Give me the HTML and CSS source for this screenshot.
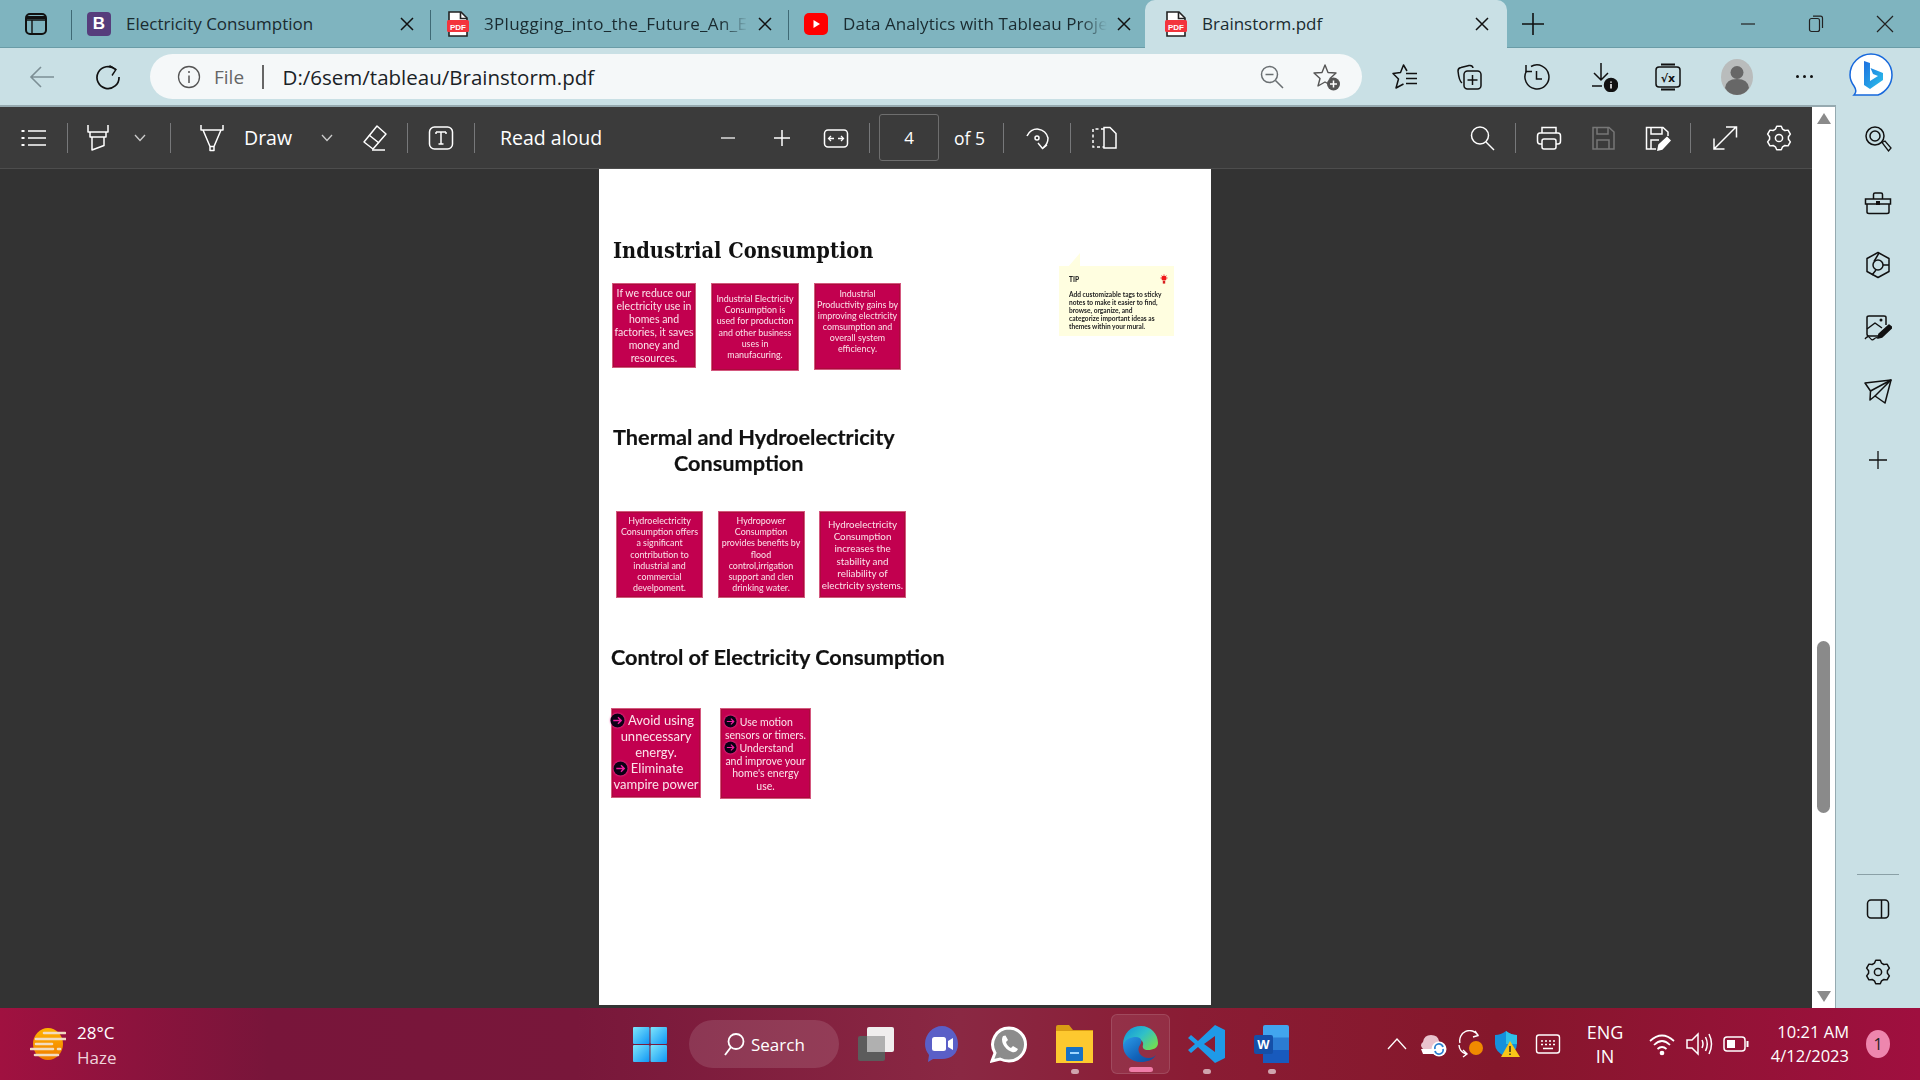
FILE: index.html
```html
<!DOCTYPE html>
<html lang="en">
<head>
  <meta charset="UTF-8" />
  <title>Brainstorm.pdf</title>
  <link rel="stylesheet" href="styles.css">
</head>
<body>

<svg class="sprite" width="0" height="0">
  <symbol id="gear" viewBox="0 0 28 28">
    <path d="M10.44 5.19 11.71 2.22H16.29L17.56 5.19 19.85 6.51 23.06 6.13 25.35 10.09 23.41 12.68V15.32L25.35 17.91 23.06 21.87 19.85 21.49 17.56 22.81 16.29 25.78H11.71L10.44 22.81 8.15 21.49 4.94 21.87 2.65 17.91 4.59 15.32V12.68L2.65 10.09 4.94 6.13 8.15 6.51Z" fill="none" stroke="currentColor" stroke-width="1.5" stroke-linejoin="round"/>
    <circle cx="14" cy="14" r="3.6" fill="none" stroke="currentColor" stroke-width="1.5"/>
  </symbol>
  <symbol id="arrow" viewBox="0 0 16 16">
    <circle cx="8" cy="8" r="7.500" fill="#0a0014"/>
    <path d="M3.500 8H12M8.500 4.500 12 8 8.500 11.500" fill="none" stroke="#f01fa0" stroke-width="1.500"/>
  </symbol>
</svg>

<div class="tabs">
  <div class="tab-menu">
    <svg width="24" height="24" viewBox="0 0 24 24" fill="none" stroke="#111" stroke-width="2"><rect x="2" y="2" width="20" height="20" rx="4"/><path d="M2 8H22M8 8V22" stroke-width="1.400"/><path d="M3 4H21V7H3Z" fill="#111" stroke="none"/></svg>
  </div>
  <div class="tab tab-1">
    <span class="fav-b">B</span>
    <span class="tab-title">Electricity Consumption</span>
    <svg class="tab-x" width="14" height="14" viewBox="0 0 14 14"><path d="M1 1 13 13M13 1 1 13" stroke="#111" stroke-width="1.500"/></svg>
  </div>
  <div class="tab tab-2">
    <svg class="fav-pdf" width="22" height="26" viewBox="0 0 22 26"><path d="M2 1H14L20 7V25H2Z" fill="#fff" stroke="#222" stroke-width="1.6"/><path d="M13.500 1V7.500H20" fill="none" stroke="#222" stroke-width="1.6"/><rect x="0" y="9" width="22" height="12" rx="1.500" fill="#f3343c"/><text x="11" y="18.500" text-anchor="middle" font-family="Liberation Sans" font-size="8" font-weight="700" fill="#fff">PDF</text></svg>
    <span class="tab-title fade">3Plugging_into_the_Future_An_E</span>
    <svg class="tab-x" width="14" height="14" viewBox="0 0 14 14"><path d="M1 1 13 13M13 1 1 13" stroke="#111" stroke-width="1.500"/></svg>
  </div>
  <div class="tab tab-3">
    <svg class="fav-yt" width="24" height="24" viewBox="0 0 24 24"><rect y="1" width="24" height="22" rx="5" fill="#f00"/><path d="M9.500 8 16 12 9.500 16Z" fill="#fff"/></svg>
    <span class="tab-title fade">Data Analytics with Tableau Proje</span>
    <svg class="tab-x" width="14" height="14" viewBox="0 0 14 14"><path d="M1 1 13 13M13 1 1 13" stroke="#111" stroke-width="1.500"/></svg>
  </div>
  <div class="tab tab-active">
    <svg class="fav-pdf" width="22" height="26" viewBox="0 0 22 26"><path d="M2 1H14L20 7V25H2Z" fill="#fff" stroke="#222" stroke-width="1.6"/><path d="M13.500 1V7.500H20" fill="none" stroke="#222" stroke-width="1.6"/><rect x="0" y="9" width="22" height="12" rx="1.500" fill="#f3343c"/><text x="11" y="18.500" text-anchor="middle" font-family="Liberation Sans" font-size="8" font-weight="700" fill="#fff">PDF</text></svg>
    <span class="tab-title">Brainstorm.pdf</span>
    <svg class="tab-x" width="14" height="14" viewBox="0 0 14 14"><path d="M1 1 13 13M13 1 1 13" stroke="#111" stroke-width="1.500"/></svg>
  </div>
  <svg class="tab-new" width="24" height="24" viewBox="0 0 24 24"><path d="M12 1V23M1 12H23" stroke="#111" stroke-width="1.600"/></svg>
  <div class="win-btns">
    <svg width="16" height="16" viewBox="0 0 16 16"><path d="M1 8H15" stroke="#222" stroke-width="1.200"/></svg>
    <svg width="16" height="18" viewBox="0 0 16 18" fill="none" stroke="#222" stroke-width="1.200"><rect x="1.500" y="3.500" width="10" height="13" rx="2"/><path d="M5 1.200H12.500Q14.500 1.200 14.500 3.200V13"/></svg>
    <svg width="18" height="18" viewBox="0 0 18 18"><path d="M1 1 17 17M17 1 1 17" stroke="#222" stroke-width="1.200"/></svg>
  </div>
</div>

<div class="nav">
  <svg class="nav-back" width="26" height="24" viewBox="0 0 26 24" fill="none" stroke="#7c8f95" stroke-width="1.600"><path d="M25 12H2M12 2 2 12 12 22"/></svg>
  <svg class="nav-reload" width="26" height="26" viewBox="0 0 26 26" fill="none" stroke="#111" stroke-width="1.700"><path d="M20.500 5.500A11 11 0 1 0 24 13"/><path d="M14.500 1.500 21 5.500 17 11.500" stroke-width="1.400"/></svg>
  <div class="address">
    <svg width="24" height="24" viewBox="0 0 24 24" fill="none" stroke="#555"><circle cx="12" cy="12" r="10.500" stroke-width="1.300"/><path d="M12 10.500V18" stroke-width="1.500"/><circle cx="12" cy="7" r="1" fill="#555" stroke="none"/></svg>
    <span class="addr-file">File</span>
    <span class="addr-sep"></span>
    <span class="addr-url">D:/6sem/tableau/Brainstorm.pdf</span>
    <svg class="addr-zoom" width="26" height="26" viewBox="0 0 26 26" fill="none" stroke="#6a6f72" stroke-width="1.500"><circle cx="10.500" cy="10.500" r="8"/><path d="M16.500 16.500 24 24M6.500 10.500H14.500"/></svg>
    <svg class="addr-star" width="30" height="30" viewBox="0 0 30 30"><path d="M13 3 16 10.500 24 11 18 16.500 20 24 13 20 6 24 8 16.500 2 11 10 10.500Z" fill="none" stroke="#555" stroke-width="1.400" stroke-linejoin="round"/><circle cx="21.500" cy="22" r="6.500" fill="#555"/><path d="M21.500 18.500V25.500M18 22H25" stroke="#fff" stroke-width="1.500"/></svg>
  </div>
  <div class="nav-tools">
    <svg class="nt-fav" width="28" height="28" viewBox="0 0 28 28" fill="none" stroke="#111" stroke-width="1.500" stroke-linejoin="round"><path d="M16 8 12.500 2 9.500 9.500 2 10.500 7.500 16 5 25 12.500 21"/><path d="M15 10.500H26M15 15.500H26M15 20.500H26"/></svg>
    <svg class="nt-coll" width="28" height="28" viewBox="0 0 28 28" fill="none" stroke="#111" stroke-width="1.500"><path d="M7 20Q4 18 3 8 3 5 6 4.500L14 2.500Q17.500 2 18 5"/><rect x="9" y="8" width="17" height="18" rx="3.500"/><path d="M17.500 12V22M12.500 17H22.500"/></svg>
    <svg class="nt-hist" width="28" height="28" viewBox="0 0 28 28" fill="none" stroke="#111" stroke-width="1.500"><path d="M8 3.500A12 12 0 1 1 3.500 8"/><path d="M3 2V8.500H9"/><path d="M13.500 8V16H19"/></svg>
    <svg class="nt-down" width="28" height="30" viewBox="0 0 28 30" fill="none" stroke="#111" stroke-width="1.500"><path d="M11 1V18M4 11 11 18 18 11M2 24H12"/><circle cx="21" cy="23" r="6.500" fill="#111"/><path d="M21 22V26.500M21 19.500V20.800" stroke="#fff" stroke-width="1.500"/></svg>
    <svg class="nt-math" width="28" height="30" viewBox="0 0 28 30" fill="none" stroke="#111" stroke-width="1.500"><rect x="2" y="5" width="24" height="20" rx="3"/><path d="M7 2.500H21M7 27.500H21" stroke-width="1.800"/><text x="14" y="20" text-anchor="middle" font-family="DejaVu Sans" font-weight="700" font-size="11" fill="#111" stroke="none">√x</text></svg>
    <svg class="nt-user" width="32" height="36" viewBox="0 0 32 36"><ellipse cx="16" cy="18" rx="16" ry="18" fill="#b9bcbc"/><circle cx="16" cy="13.500" r="6.500" fill="#676767"/><path d="M4 29Q5 20 16 20T28 29Q24 36 16 36T4 29Z" fill="#676767"/></svg>
    <span class="nav-dots"><i></i><i></i><i></i></span>
    <svg class="nav-bing" width="46" height="46" viewBox="0 0 46 46"><defs><linearGradient id="bg1" x1="0" y1="0" x2="1" y2="1"><stop offset="0" stop-color="#1d6fe0"/><stop offset="1" stop-color="#2bc3ea"/></linearGradient></defs><path d="M23 1C34 1 44 10 44 22 44 31 38 39 30 42H6C9 39 8 36 6 33 3 29 2 26 2 22 2 10 12 1 23 1Z" fill="#fff" stroke="#1668dc" stroke-width="1.500"/><path d="M16 8 22 10V28L30 23 25 21 22.500 15 35 20V27L22 36 16 32Z" fill="url(#bg1)"/></svg>
  </div>
</div>

<div class="main">
  <div class="viewer">
    <div class="tbar">
      <div class="tb-left">
        <svg class="ic" viewBox="0 0 28 28" fill="none" stroke="#fff" stroke-width="1.500"><path d="M8 7H26M8 14H26M8 21H26"/><path d="M1.500 7H4.500M1.500 14H4.500M1.500 21H4.500" stroke-width="2"/></svg>
        <i class="sep"></i>
        <svg class="ic ic-near" viewBox="0 0 28 28" fill="none" stroke="#fff" stroke-width="1.500" stroke-linejoin="round"><path d="M4 1V8H24V1"/><path d="M6 8V13H22V8"/><path d="M8 13V26L20 21.500V13"/></svg>
        <svg class="chev chev-a" viewBox="0 0 14 10" fill="none" stroke="#ccc" stroke-width="1.300"><path d="M2 2 7 7.500 12 2"/></svg>
        <i class="sep sep-a"></i>
        <svg class="ic ic-far" viewBox="0 0 28 28" fill="none" stroke="#fff" stroke-width="1.500" stroke-linejoin="round"><path d="M3 1V6H25V1M5 6 12 22.500V26.500H16V22.500L23 6M12 22.500H16"/></svg>
        <span class="tb-text tb-draw">Draw</span>
        <svg class="chev chev-b" viewBox="0 0 14 10" fill="none" stroke="#ccc" stroke-width="1.300"><path d="M2 2 7 7.500 12 2"/></svg>
        <svg class="ic ic-erase" viewBox="0 0 28 28" fill="none" stroke="#fff" stroke-width="1.500" stroke-linejoin="round"><path d="M17 2 26 10 13 25 4 18Z"/><path d="M9 11 19 19M12 26H25"/></svg>
        <i class="sep"></i>
        <svg class="ic" viewBox="0 0 28 28" fill="none" stroke="#fff" stroke-width="1.500"><rect x="2.500" y="3" width="23" height="22" rx="5"/><path d="M9 8H19M14 8V20M11.500 20H16.500M9 8V10M19 8V10"/></svg>
        <i class="sep"></i>
        <span class="tb-text tb-read">Read aloud</span>
      </div>
      <div class="tb-mid">
        <svg class="ic" viewBox="0 0 28 28" fill="none" stroke="#ddd" stroke-width="1.500"><path d="M7 14H21"/></svg>
        <svg class="ic" viewBox="0 0 28 28" fill="none" stroke="#fff" stroke-width="1.500"><path d="M6 14H22M14 6V22"/></svg>
        <svg class="ic" viewBox="0 0 28 28" fill="none" stroke="#fff" stroke-width="1.500"><rect x="2.500" y="6" width="23" height="17" rx="3.500"/><path d="M7 14.500H12M16 14.500H21"/><path d="M9 12 6.500 14.500 9 17M19 12 21.500 14.500 19 17" stroke-width="1.300"/></svg>
        <i class="sep"></i>
        <span class="page-box">4</span>
        <span class="tb-text tb-of">of 5</span>
        <i class="sep"></i>
        <svg class="ic" viewBox="0 0 28 28" fill="none" stroke="#fff" stroke-width="1.500"><path d="M4 12A11 11 0 0 1 25 14Q25 20 20 24"/><path d="M15 19 19.500 24.500 24 21" stroke-width="1.400"/><circle cx="14" cy="14" r="2"/></svg>
        <i class="sep"></i>
        <svg class="ic" viewBox="0 0 28 28" fill="none" stroke="#fff" stroke-width="1.500"><path d="M14 5H3V23H14" stroke-dasharray="3 2.500"/><path d="M14 3.500H20L26 9.500V24H14Z"/></svg>
      </div>
      <div class="tb-right">
        <svg class="ic" viewBox="0 0 28 28" fill="none" stroke="#fff" stroke-width="1.500"><circle cx="12" cy="11.500" r="8.500"/><path d="M18 18 26 26"/></svg>
        <i class="sep"></i>
        <svg class="ic" viewBox="0 0 28 28" fill="none" stroke="#fff" stroke-width="1.500"><path d="M7 9V3.500H21V9"/><path d="M7 20H5Q2.500 20 2.500 17V12Q2.500 9 5 9H23Q25.500 9 25.500 12V17Q25.500 20 23 20H21"/><rect x="7" y="15" width="14" height="10" rx="2"/></svg>
        <svg class="ic ic-dim" viewBox="0 0 28 28" fill="none" stroke="#777" stroke-width="1.500"><path d="M4 3.500H20L25 8V25H4Z"/><path d="M8 3.500V10H19V3.500M8 25V16H20V25"/></svg>
        <svg class="ic" viewBox="0 0 28 28" fill="none" stroke="#fff" stroke-width="1.500"><path d="M13 25H3.500V3.500H20L25 8V12"/><path d="M8 3.500V10H19V3.500M8 25V16H16"/><path d="M15 26 16 21 24 13.500 27 16.500 19 25Z" fill="#fff"/></svg>
        <i class="sep"></i>
        <svg class="ic" viewBox="0 0 28 28" fill="none" stroke="#fff" stroke-width="1.500"><path d="M3 25 25 3M15 3H25.500V13.500M3 14.500V25H13.500"/></svg>
        <svg class="ic ic-gear"><use href="#gear"/></svg>
      </div>
    </div>

    <div class="canvas">
      <div class="page">
        <div class="tip">
          <svg class="tip-tail" width="14" height="14" viewBox="0 0 14 14"><path d="M0 14 12 0V14Z" fill="#fffee0"/></svg>
          <div class="tip-head">TIP <svg width="8" height="10" viewBox="0 0 8 10"><circle cx="4" cy="4" r="2.600" fill="#f01818"/><rect x="2.800" y="7" width="2.400" height="2.600" fill="#d62020"/><path d="M4 0V1M0 4H1M7 4H8M1 1 1.800 1.800M7 1 6.200 1.800" stroke="#f05050" stroke-width=".6"/></svg></div>
          <p>Add customizable tags to sticky<br>notes to make it easier to find,<br>browse, organize, and<br>categorize important ideas as<br>themes within your mural.</p>
        </div>

        <h2 class="head-slab">Industrial Consumption</h2>
        <div class="cards cards-1">
          <div class="card c84 big">If we reduce our<br>electricity use in<br>homes and<br>factories, it saves<br>money and<br>resources.</div>
          <div class="card c88">Industrial Electricity<br>Consumption is<br>used for production<br>and other business<br>uses in<br>manufacuring.</div>
          <div class="card c87">Industrial<br>Productivity gains by<br>improving electricity<br>comsumption and<br>overall system<br>efficiency.</div>
        </div>

        <h2 class="head head-thermal">Thermal and Hydroelectricity<span>Consumption</span></h2>
        <div class="cards cards-2">
          <div class="card c87">Hydroelectricity<br>Consumption offers<br>a significant<br>contribution to<br>industrial and<br>commercial<br>develpoment.</div>
          <div class="card c87">Hydropower<br>Consumption<br>provides benefits by<br>flood<br>control,irrigation<br>support and clen<br>drinking water.</div>
          <div class="card c87 mid">Hydroelectricity<br>Consumption<br>increases the<br>stability and<br>reliability of<br>electricity systems.</div>
        </div>

        <h2 class="head head-control">Control of Electricity Consumption</h2>
        <div class="cards cards-3">
          <div class="card c90 large"><span class="first-line"><svg class="bullet"><use href="#arrow"/></svg> Avoid using</span>unnecessary<br>energy.<br><span class="off-large"><svg class="bullet"><use href="#arrow"/></svg> Eliminate</span><br>vampire power</div>
          <div class="card c91 big"><span class="off-big"><svg class="bullet-sm"><use href="#arrow"/></svg> Use motion</span><br>sensors or timers.<br><span class="off-big"><svg class="bullet-sm"><use href="#arrow"/></svg> Understand</span><br>and improve your<br>home's energy<br>use.</div>
        </div>
      </div>
    </div>
  </div>

  <div class="scroll">
    <svg width="14" height="11" viewBox="0 0 14 11"><path d="M7 0 14 11H0Z" fill="#8a8a8a"/></svg>
    <div class="thumb"></div>
    <svg width="14" height="11" viewBox="0 0 14 11"><path d="M0 0H14L7 11Z" fill="#8a8a8a"/></svg>
  </div>

  <div class="side">
    <svg class="side-ic" viewBox="0 0 28 28" fill="none" stroke="#111" stroke-width="1.500"><circle cx="11" cy="11" r="9"/><circle cx="11" cy="11" r="5"/><path d="M18 17.500 21 16 27 23 24.500 26Z" stroke-width="1.300"/></svg>
    <svg class="side-ic" viewBox="0 0 28 28" fill="none" stroke="#111" stroke-width="1.500"><path d="M1.500 11H26.500V16H1.500ZM3 16V24Q3 25.500 5 25.500H23Q25 25.500 25 24V16M9.500 11V6.500Q9.500 5 11 5H17Q18.500 5 18.500 6.500V11"/><rect x="12" y="13" width="4" height="4" fill="#111" stroke="none"/></svg>
    <svg class="side-ic" viewBox="0 0 28 28" fill="none" stroke="#111" stroke-width="1.500" stroke-linejoin="round"><path d="M14 1.500 25 7.500V20.500L14 26.500 3 20.500V7.500Z"/><circle cx="14" cy="14" r="5"/><path d="M10 10.500 15 2M19 14H25M12 19 8 24"/></svg>
    <svg class="side-ic" viewBox="0 0 28 28" fill="none" stroke="#111" stroke-width="1.500" stroke-linejoin="round"><path d="M15 22H5Q3 22 3 20V3.500Q3 2 5 2H20Q22 2 22 3.500V11"/><path d="M3 15 11 9 18 14"/><circle cx="17" cy="6" r="1.500" fill="#111" stroke="none"/><path d="M15 20 25 11 28 13.500 18 23 14 24Z" fill="#111"/><path d="M1 25Q4 21 6 24T10 25 14 24" stroke-width="1.300"/></svg>
    <svg class="side-ic" viewBox="0 0 28 28" fill="none" stroke="#111" stroke-width="1.500" stroke-linejoin="round"><path d="M1 6 27 3 21 26 11 19 6 23 6.500 14Z"/><path d="M6.500 14 27 3 11 19"/></svg>
    <svg class="side-ic side-plus" viewBox="0 0 28 28" fill="none" stroke="#111" stroke-width="1.300"><path d="M14 5V23M5 14H23"/></svg>
    <div class="side-sep"></div>
    <svg class="side-ic" viewBox="0 0 28 28" fill="none" stroke="#111" stroke-width="1.500"><rect x="3.500" y="5" width="21" height="18" rx="3.500"/><path d="M17.500 5V23"/></svg>
    <svg class="side-ic"><use href="#gear"/></svg>
  </div>
</div>

<div class="taskbar">
  <div class="weather">
    <svg width="36" height="32" viewBox="0 0 36 32"><defs><linearGradient id="sun" x1="0" y1="0" x2="0" y2="1"><stop offset="0" stop-color="#ffb400"/><stop offset="1" stop-color="#f07a00"/></linearGradient></defs><ellipse cx="18" cy="16" rx="15" ry="16" fill="url(#sun)"/><g stroke="#f2dcc0" stroke-width="2.600" stroke-linecap="round"><path d="M14 5H35M6 11H36M6 16H22M1 21H23M28 21H30M5 27H28"/></g></svg>
    <div class="weather-txt"><span>28°C</span><span class="haze">Haze</span></div>
  </div>

  <svg class="win-logo" width="34" height="35" viewBox="0 0 34 35"><defs><linearGradient id="win" x1="0" y1="0" x2="1" y2="1"><stop offset="0" stop-color="#7fe6fb"/><stop offset="1" stop-color="#0f96f5"/></linearGradient></defs><rect x="0" y="0" width="16.500" height="17" rx="1" fill="url(#win)"/><rect x="17.500" y="0" width="16.500" height="17" rx="1" fill="url(#win)"/><rect x="0" y="18" width="16.500" height="17" rx="1" fill="url(#win)"/><rect x="17.500" y="18" width="16.500" height="17" rx="1" fill="url(#win)"/></svg>

  <div class="search">
    <svg width="22" height="24" viewBox="0 0 22 24" fill="none" stroke="#fff" stroke-width="1.800"><circle cx="13" cy="9.500" r="7.500"/><path d="M8 15 2 23"/></svg>
    <span>Search</span>
  </div>

  <svg class="app task-view" width="36" height="34" viewBox="0 0 36 34"><rect y="9" width="27" height="25" rx="2" fill="#5c5c5c"/><rect x="9" width="27" height="25" rx="2" fill="#f0eeee"/><rect x="9" y="9" width="18" height="16" fill="#b0b0b0"/></svg>

  <svg class="app teams" width="34" height="36" viewBox="0 0 34 36"><path d="M17 0C26 0 33 8 33 18S26 33 17 33H8L3 36 4 29Q0 24 0 18C0 8 8 0 17 0Z" fill="#5a5fc7"/><rect x="7" y="11" width="14" height="14" rx="2.500" fill="#fff"/><path d="M23 15 28 12V24L23 21Z" fill="#fff"/></svg>

  <svg class="app whatsapp" width="38" height="37" viewBox="0 0 38 37"><path d="M19 2A16.500 16.500 0 0 1 19 35Q14 35 10 33L2 35 5 27A16.500 16.500 0 0 1 19 2Z" fill="#8c8c8c" stroke="#fff" stroke-width="3"/><path d="M13 10Q11 13 13 18T22 26Q26 27 28 23L23 20 21 22Q17 20 16 16L18 14 15.500 9.500Z" fill="#fff"/></svg>

  <div class="app-wrap running folder">
    <svg width="37" height="38" viewBox="0 0 37 38"><path d="M0 2Q0 0 2 0H13L17 5H37V8H0Z" fill="#d99c14"/><path d="M0 6H37V38H0Z" fill="#fdc92f"/><rect x="10" y="22" width="17" height="14" rx="1" fill="#1871c4"/><rect x="14" y="27" width="9" height="2" fill="#9fd6ff"/></svg>
  </div>

  <div class="app-wrap active edge">
    <svg width="37" height="38" viewBox="0 0 37 38"><defs><linearGradient id="edg1" x1="0" y1="0" x2="1" y2=".7"><stop offset="0" stop-color="#0f8fdc"/><stop offset=".55" stop-color="#30c0c8"/><stop offset="1" stop-color="#6fdc58"/></linearGradient><linearGradient id="edg2" x1="0" y1="0" x2="1" y2="1"><stop offset="0" stop-color="#2b9be8"/><stop offset=".6" stop-color="#1262b8"/><stop offset="1" stop-color="#0d4a9a"/></linearGradient></defs><path d="M1 20C1 8 9 1 19 1 29 1 36 9 36 18 36 23 31 25 26 25 22 25 20 23 21 20 22 17 19 14 15 14 8 14 4 18 1 20Z" fill="url(#edg1)"/><path d="M1 20C3 14 9 12 14 12 19 12 21 16 18 20 14 25 18 33 27 33 30 33 32 32 34 30 31 35 25 37 19 37 9 37 1 30 1 20Z" fill="url(#edg2)"/></svg>
  </div>

  <div class="app-wrap running vscode">
    <svg width="37" height="38" viewBox="0 0 37 38"><path d="M27 0 37 5V33L27 38 10 22 3 28 0 25 7 19 0 13 3 10 10 16ZM27 11 16 19 27 27Z" fill="#1f9ae8"/></svg>
  </div>

  <div class="app-wrap running word">
    <svg width="35" height="38" viewBox="0 0 35 38"><path d="M9 2Q9 0 11 0H33Q35 0 35 2V13H9Z" fill="#41a5ee"/><rect x="9" y="12.500" width="26" height="13" fill="#2b7cd3"/><rect x="9" y="25" width="26" height="13" fill="#185abd"/><rect y="10" width="19" height="19" rx="2" fill="#144fa8"/><text x="9.500" y="24" text-anchor="middle" font-family="Liberation Sans" font-weight="700" font-size="13" fill="#fff">W</text></svg>
  </div>

  <div class="tray">
    <svg class="tray-caret" width="20" height="12" viewBox="0 0 20 12" fill="none" stroke="#fff" stroke-width="1.300"><path d="M1 11 10 1 19 11"/></svg>
    <svg class="tray-ic tray-drive" viewBox="0 0 28 28"><path d="M4 19Q0 15 4 12 5 5 12 5 19 5 20 11L24 19Z" fill="#e9c3cd"/><path d="M2 19H16V24H4Z" fill="#fff"/><circle cx="20" cy="19" r="7.500" fill="#fff"/><path d="M16 19A4 4 0 0 1 24 17M24 19A4 4 0 0 1 16 21" fill="none" stroke="#2a7fd0" stroke-width="1.800"/></svg>
    <svg class="tray-ic" viewBox="0 0 28 28"><path d="M4 13A10 10 0 0 1 22 5M19 1 22 5.500 17 7M3 15A10 10 0 0 0 10 24M7 27 11 24 7 20" fill="none" stroke="#fff" stroke-width="1.400"/><circle cx="20" cy="18" r="7" fill="#f08a00"/></svg>
    <svg class="tray-ic" viewBox="0 0 28 28"><path d="M13 1Q18 5 24 5V14Q24 22 13 27 2 22 2 14V5Q8 5 13 1Z" fill="#1490dc"/><path d="M13 1Q18 5 24 5V14H13Z" fill="#2fc1e8"/><path d="M17 11 27 27H8Z" fill="#f9c518"/><path d="M17 16V22M17 23.500V25" stroke="#222" stroke-width="1.400"/></svg>
    <svg class="tray-ic tray-kbd" viewBox="0 0 28 28" fill="none" stroke="#fff" stroke-width="1.400"><rect x="2.500" y="5" width="23" height="18" rx="2.500"/><path d="M7 11H9M11 11H13M15 11H17M19 11H21M7 14.500H9M11 14.500H13M15 14.500H17M19 14.500H21M9 18.500H19"/></svg>
    <div class="lang"><span>ENG</span><span>IN</span></div>
    <svg class="tray-ic tray-wifi" viewBox="0 0 28 28" fill="none" stroke="#fff" stroke-width="1.700"><path d="M2 11Q14 0 26 11M6 15Q14 7 22 15M9.500 19Q14 15 18.500 19"/><circle cx="14" cy="23" r="1.500" fill="#fff"/></svg>
    <svg class="tray-ic" viewBox="0 0 28 28" fill="none" stroke="#fff" stroke-width="1.500"><path d="M2 10H7L13 4V24L7 18H2Z"/><path d="M17 10Q19 14 17 18M20.500 7Q24 14 20.500 21M24 4Q29 14 24 24"/></svg>
    <svg class="tray-ic" viewBox="0 0 28 28" fill="none" stroke="#fff" stroke-width="1.500"><rect x="2" y="7" width="21" height="14" rx="3"/><path d="M25.500 11V17" stroke-width="2"/><rect x="5" y="10" width="8" height="8" fill="#fff" stroke="none"/></svg>
    <div class="clock"><span>10:21 AM</span><span>4/12/2023</span></div>
    <span class="notif">1</span>
  </div>
</div>

</body>
</html>
```

FILE: styles.css
```css
* { box-sizing: border-box; }
html, body { margin: 0; height: 100%; }
body {
  width: 1920px; height: 1080px; overflow: hidden;
  display: flex; flex-direction: column;
  font-family: "Open Sans", "Noto Sans", sans-serif;
  background: #c9e0e5; color: #111;
}
svg { display: block; flex-shrink: 0; }
.sprite { position: absolute; }

/* tab strip */
.tabs { height: 48px; background: #7fb4bf; display: flex; align-items: center; box-shadow: inset 0 -1px 0 #6a9ca7; }
.tab-menu { width: 71px; display: flex; justify-content: center; }
.tab { height: 48px; display: flex; align-items: center; position: relative; }
.tab::before { content: ""; position: absolute; left: 0; top: 10px; height: 30px; width: 1px; background: #3f6a75; }
.tab-1 { width: 359px; padding: 0 16px 0 16px; }
.tab-2 { width: 358px; padding: 0 16px 0 17px; }
.tab-3 { width: 357px; padding: 0 14px 0 16px; }
.tab-active {
  width: 362px; padding: 0 18px 0 20px;
  background: #c9e0e5; border-radius: 10px 10px 0 0;
}
.tab-active::before { display: none; }
.tab-title { flex: 1; margin: -2px 0 0 15px; font-size: 17px; white-space: nowrap; color: #1a2b30; }
.fade { -webkit-mask-image: linear-gradient(90deg, #000 90%, transparent 100%); mask-image: linear-gradient(90deg, #000 90%, transparent 100%); margin-right: 10px; overflow: hidden; }
.tab-2 .fade { letter-spacing: .3px; }
.tab-3 .fade { letter-spacing: .05px; }
.fav-b { width: 24px; height: 24px; background: #563d7c; border-radius: 4px; color: #fff; font: 700 17px/24px "Liberation Sans", sans-serif; text-align: center; }
.tab-new { margin-left: 14px; }
.win-btns { margin-left: auto; padding-right: 26px; display: flex; align-items: center; gap: 52px; }

/* address row */
.nav { height: 57px; background: #c9e0e5; display: flex; align-items: center; padding-left: 29px; }
.nav-reload { margin-left: 40px; }
.address {
  width: 1212px; height: 45px; margin-left: 29px;
  background: #f5f8f9; border-radius: 23px;
  display: flex; align-items: center; padding-left: 27px;
}
.addr-file { margin-left: 13px; font-size: 19px; color: #666; }
.addr-sep { width: 1.5px; height: 24px; background: #666; margin: 0 19px 0 18px; }
.addr-url { font-size: 20.500px; color: #1a2226; }
.addr-zoom { margin-left: auto; }
.addr-star { margin: 0 20px 0 27px; }
.nav-tools { display: flex; align-items: center; margin-left: 29px; flex: 1; }
.nt-coll { margin-left: 36px; }
.nt-hist { margin-left: 40px; }
.nt-down { margin-left: 39px; }
.nt-math { margin-left: 36px; }
.nt-user { margin-left: 39px; }
.nav-dots { margin-left: 43px; display: flex; gap: 4px; }
.nav-dots i { width: 3px; height: 3px; border-radius: 50%; background: #111; }
.nav-bing { margin: -2px 0 0 35px; }

/* main area */
.main { flex: 1; display: flex; min-height: 0; }
.viewer { width: 1812px; display: flex; flex-direction: column; border-top: 2px solid #96aab0; }
.tbar { height: 62px; flex-shrink: 0; background: #3b3b3b; border-bottom: 1px solid #4d4d4d; display: flex; align-items: center; padding: 0 19px 0 20px; color: #fff; }
.tb-left { width: 694px; display: flex; align-items: center; }
.tb-mid { display: flex; align-items: center; }
.tb-right { display: flex; align-items: center; margin-left: auto; }
.tb-right .sep:last-of-type { margin-right: 20px; }
.ic { width: 28px; height: 28px; }
.ic + .ic { margin-left: 26px; }
.sep { width: 1px; height: 30px; background: #77787a; margin: 0 19px; flex-shrink: 0; }
.sep-a { margin-left: 23px; margin-right: 27px; }
.ic-near { margin-left: -3px; }
.chev { width: 14px; height: 10px; }
.chev-a { margin-left: 21px; }
.chev-b { margin-left: 29px; }
.ic-erase { margin-left: 26px; }
.tb-text { font-size: 19.500px; color: #fff; white-space: nowrap; }
.tb-draw { margin-left: 18px; width: 47px; }
.tb-read { margin-left: 6px; }
.page-box { width: 60px; height: 47px; margin-left: -10px; border: 1px solid #6e6e6e; border-radius: 3px; text-align: center; font-size: 17px; line-height: 45px; }
.tb-of { margin-left: 15px; margin-right: -1px; font-size: 17.500px; }
.ic-gear { color: #fff; }

.canvas { flex: 1; background: #333; padding: 0 2px 3px 0; min-height: 0; }

/* pdf page */
.page {
  width: 612px; height: 100%; margin: 0 auto; background: #fff;
  padding: 69px 0 0 12px; position: relative; overflow: hidden;
  font-family: Lato, "Open Sans", sans-serif;
}
.tip {
  position: absolute; left: 460px; top: 97px; width: 115px; height: 70px;
  background: #fffee0; padding: 8px 0 0 10px; color: #222;
  font-family: Lato, sans-serif; filter: blur(.3px);
}
.tip-tail { position: absolute; left: 9px; top: -13px; }
.tip-head { display: flex; justify-content: space-between; align-items: center; padding-right: 6px; font-size: 6.500px; font-weight: 900; }
.tip p { margin: 6px 0 0; font-size: 6.600px; line-height: 8.100px; font-weight: 700; white-space: nowrap; }

.head, .head-slab { margin: 0; font-size: 21.700px; line-height: 26px; font-weight: 700; color: #111; filter: blur(.25px); -webkit-text-stroke: .2px #111; }
.head-slab { font-family: "DejaVu Serif Condensed", "DejaVu Serif", serif; font-size: 21.600px; margin-left: 2px; -webkit-text-stroke: 0; }
.head-thermal { margin: 53px 0 0 2px; }
.head-thermal span { display: block; margin-left: 61px; }
.head-control { margin-top: 46px; }

.cards { display: flex; align-items: flex-start; }
.cards-1 { margin-top: 19px; margin-left: 1px; gap: 15px; }
.cards-2 { margin-top: 35px; margin-left: 5px; gap: 14.500px; }
.cards-3 { margin-top: 38px; gap: 19px; }
.card {
  display: block; text-align: center;
  background: #c2004f; border: 1px solid #d4587f; box-shadow: inset 0 0 0 1px #ab0a3c;
  color: #fbe3ea; font-size: 8.900px; line-height: 11.200px; white-space: nowrap;
  filter: blur(.3px); padding-top: 7px;
}
.c84 { width: 84px; height: 85px; padding-top: 3px; }
.c87 { width: 87px; height: 87px; }
.c88 { width: 88px; height: 88px; padding-top: 9px; }
.c90 { width: 90px; height: 90px; padding-top: 4px; }
.c91 { width: 91px; height: 91px; padding-top: 6px; }
.cards-1 .c87 { padding-top: 4px; line-height: 11px; }
.cards-2 .c87 { padding-top: 3px; }
.big { font-size: 10.500px; line-height: 12.900px; }
.c91.big { line-height: 12.600px; }
.cards .mid { font-size: 9.800px; line-height: 12.200px; padding-top: 6px; }
.large { font-size: 13px; line-height: 15.900px; }
.first-line { display: block; padding-right: 2px; }
.off-large { padding-right: 16px; }
.off-big { padding-right: 14px; }
.bullet { display: inline-block; width: 15px; height: 15px; vertical-align: -3px; filter: drop-shadow(0 0 1px #ff50b0); }
.first-line .bullet { margin-left: -6px; }
.bullet-sm { display: inline-block; width: 13px; height: 13px; vertical-align: -2px; filter: drop-shadow(0 0 1px #ff50b0); }

/* scrollbar */
.scroll { width: 24px; background: #fff; border-top: 2px solid #96aab0; border-right: 1px solid #96aab0; display: flex; flex-direction: column; align-items: center; padding: 6px 0 6px; }
.thumb { width: 13px; height: 172px; margin: auto 0 178px; background: #8a8a8a; border-radius: 7px; }

/* right rail */
.side { flex: 1; display: flex; flex-direction: column; align-items: center; padding-top: 20px; gap: 35px; }
.side-ic { width: 28px; height: 28px; color: #111; }
.side-plus { margin-top: 6px; }
.side-sep { width: 42px; height: 1px; background: #8aa0a6; margin: 365px 0 -15px; }

/* taskbar */
.taskbar {
  height: 72px; display: flex; align-items: center; color: #fff;
  background: linear-gradient(90deg, #a01140 0, #78153a 14%, #78173a 30%, #8a2843 50%, #8a1c34 62%, #85172b 78%, #9f0f3f 100%);
}
.weather { width: 633px; padding-left: 30px; display: flex; align-items: center; gap: 11px; }
.weather-txt { display: flex; flex-direction: column; padding-top: 2px; font-size: 17px; line-height: 25px; }
.haze { color: #eed3db; }
.search { width: 150px; height: 48px; margin-left: 22px; background: rgba(255,255,255,.12); border-radius: 24px; display: flex; align-items: center; padding-left: 34px; gap: 6px; font-size: 17px; }
.app { margin-left: 31px; }
.task-view { margin-left: 19px; }
.app-wrap { position: relative; height: 60px; display: flex; align-items: center; justify-content: center; margin-left: 28px; }
.running::after { content: ""; position: absolute; left: 50%; bottom: 0; width: 8px; height: 5px; margin-left: -4px; border-radius: 3px; background: #d0a4ae; }
.edge { width: 59px; margin-left: 18px; background: rgba(255,255,255,.08); border: 1px solid rgba(255,255,255,.12); border-radius: 6px; }
.active::after { content: ""; position: absolute; left: 50%; bottom: 1px; width: 24px; height: 5px; margin-left: -12px; border-radius: 3px; background: #f07ca8; }
.vscode { margin-left: 18px; }
.word { margin-left: 29px; }
.tray { margin-left: auto; padding-right: 30px; display: flex; align-items: center; gap: 9px; }
.tray-ic { width: 28px; height: 28px; }
.tray-drive { margin-left: 3px; }
.tray-kbd { margin-left: 4px; }
.lang, .clock { display: flex; flex-direction: column; line-height: 24px; font-size: 16.500px; }
.lang { width: 40px; align-items: center; margin: 0 14px; font-size: 18px; }
.clock { width: 88px; align-items: flex-end; margin: 0 8px 0 2px; }
.notif { width: 24px; height: 28px; border-radius: 50%; background: #ee86ae; color: #222; text-align: center; font-size: 16px; line-height: 28px; }
```
